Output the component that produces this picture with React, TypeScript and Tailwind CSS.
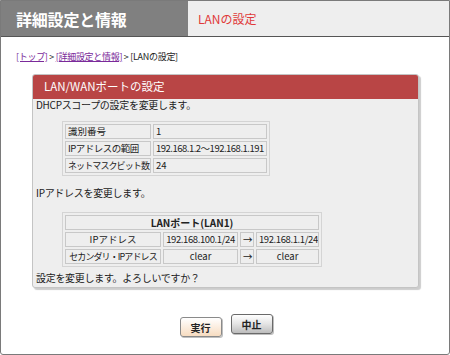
import React from "react";

const font = { fontFamily: '"Noto Sans CJK JP", "Noto Sans", sans-serif' };

const Cell = ({
  children,
  className = "",
  colSpan,
}: {
  children: React.ReactNode;
  className?: string;
  colSpan?: number;
}) => (
  <td
    colSpan={colSpan}
    className={`border border-[#c8c8c8] px-[2px] p-0 h-[15px] leading-[13px] whitespace-nowrap overflow-hidden ${className}`}
  >
    {children}
  </td>
);

const App = () => {
  return (
    <div
      style={font}
      className="w-[450px] h-[355px] bg-white border border-[#7a7a7a] rounded-b-[3px] overflow-hidden text-[10px] text-[#222]"
    >
      {/* header */}
      <div className="flex h-[36px] border-b border-[#555]">
        <div className="w-[187px] bg-[#808080] text-white font-bold text-[16px] flex items-center pl-[15px] tracking-[-0.2px]">
          詳細設定と情報
        </div>
        <div className="flex-1 bg-[#eeeeee] text-[#e03a3a] text-[12px] flex items-center pl-[10px]">
          LANの設定
        </div>
      </div>

      {/* breadcrumb */}
      <div className="mt-[13px] pl-[15px] text-[9px] leading-[14px] tracking-[-0.3px]">
        <span className="text-[#7a2a9a] underline">[トップ]</span> &gt;{" "}
        <span className="text-[#7a2a9a] underline">[詳細設定と情報]</span> &gt; [LANの設定]
      </div>

      {/* panel */}
      <div className="ml-[31px] mt-[10px] w-[387px] bg-[#eeeeee] border border-[#c4c4c4] rounded-[3px] shadow-[2px_2px_1px_rgba(0,0,0,0.2)] pb-[2px]">
        <div className="h-[24px] bg-[#b94545] text-white text-[11.5px] flex items-center pl-[11px] rounded-t-[2px]">
          LAN/WANポートの設定
        </div>
        <div className="pl-[3px] leading-[14px] -mt-[1px] tracking-[-0.3px]">DHCPスコープの設定を変更します。</div>

        <table className="ml-[29px] mt-[9px] table-fixed w-[208px] border border-[#d4d4d4] border-separate border-spacing-[2px] text-[9.5px]">
          <colgroup>
            <col className="w-[86px]" />
            <col className="w-[114px]" />
          </colgroup>
          <tbody>
            <tr>
              <Cell>識別番号</Cell>
              <Cell>1</Cell>
            </tr>
            <tr>
              <Cell className="tracking-[-0.5px]">IPアドレスの範囲</Cell>
              <Cell className="tracking-[-0.5px]">192.168.1.2～192.168.1.191</Cell>
            </tr>
            <tr>
              <Cell className="text-[9px] tracking-[-0.9px]">ネットマスクビット数</Cell>
              <Cell>24</Cell>
            </tr>
          </tbody>
        </table>

        <div className="pl-[3px] leading-[14px] mt-[10px] tracking-[-0.3px]">IPアドレスを変更します。</div>

        <table className="ml-[29px] mt-[12px] table-fixed w-[258px] border border-[#d4d4d4] border-separate border-spacing-[2px] text-[9.5px]">
          <colgroup>
            <col className="w-[96px]" />
            <col className="w-[75px]" />
            <col className="w-[14px]" />
            <col className="w-[63px]" />
          </colgroup>
          <tbody>
            <tr>
              <Cell colSpan={4} className="text-center font-bold text-[10px]">
                LANポート(LAN1)
              </Cell>
            </tr>
            <tr>
              <Cell className="text-center">IPアドレス</Cell>
              <Cell className="text-center tracking-[-0.4px]">192.168.100.1/24</Cell>
              <Cell className="text-center">→</Cell>
              <Cell className="text-center tracking-[-0.4px]">192.168.1.1/24</Cell>
            </tr>
            <tr>
              <Cell className="text-center text-[9px] tracking-[-0.9px]">セカンダリ・IPアドレス</Cell>
              <Cell className="text-center">clear</Cell>
              <Cell className="text-center">→</Cell>
              <Cell className="text-center">clear</Cell>
            </tr>
          </tbody>
        </table>

        <div className="pl-[3px] leading-[14px] mt-[4px] tracking-[-0.3px]">設定を変更します。よろしいですか？</div>
      </div>

      {/* buttons */}
      <div className="flex justify-center items-start gap-[9px] mt-[26px] pl-[2px]">
        <button className="mt-[3px] w-[42px] h-[20px] rounded-[3px] border border-[#8a8a8a] bg-gradient-to-b from-[#ffffff] to-[#f7dcc0] text-[10px] font-bold text-[#222] shadow-[1px_1px_0_rgba(0,0,0,0.25)]">
          実行
        </button>
        <button className="w-[42px] h-[20px] rounded-[3px] border border-[#6a6a6a] bg-gradient-to-b from-[#ffffff] via-[#e4e4e4] to-[#bdbdbd] text-[10px] font-bold text-[#222] shadow-[1px_1px_0_rgba(0,0,0,0.25)]">
          中止
        </button>
      </div>
    </div>
  );
};

export default App;
